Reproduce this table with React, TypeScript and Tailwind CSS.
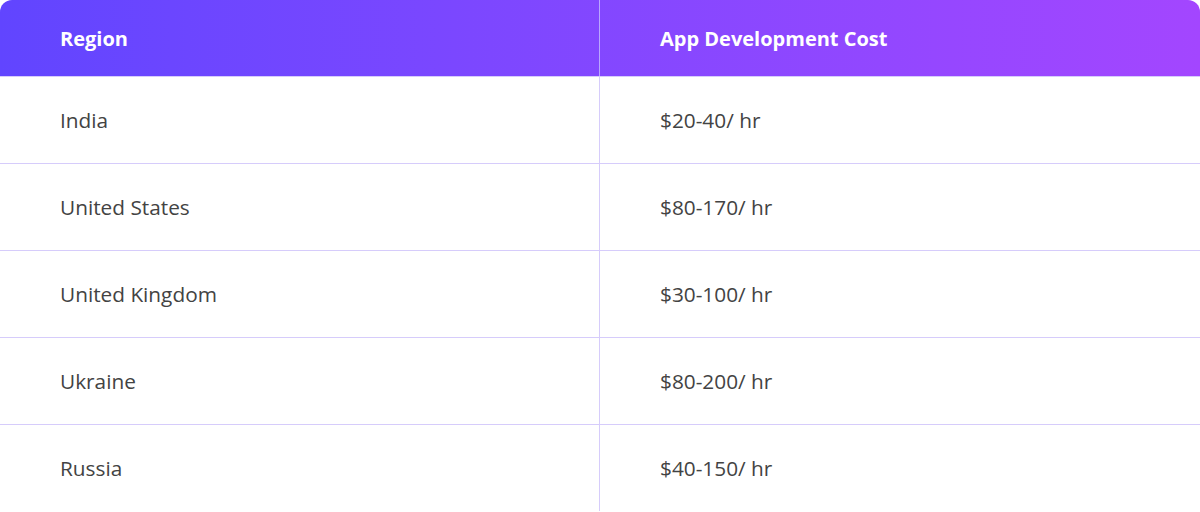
const rows: Array<[string, string]> = [
  ["India", "$20-40/ hr"],
  ["United States", "$80-170/ hr"],
  ["United Kingdom", "$30-100/ hr"],
  ["Ukraine", "$80-200/ hr"],
  ["Russia", "$40-150/ hr"],
];

export default function App() {
  return (
    <div className="w-[1200px] h-[512px] overflow-hidden bg-white font-['Open_Sans',sans-serif]">
      <div className="grid h-[76px] grid-cols-[600px_600px] rounded-t-[12px] bg-gradient-to-r from-[#6145ff] to-[#a346ff] text-[20px] font-bold text-white">
        <div className="flex items-center border-r border-[#b9a6ff] pt-[2px] pl-[60px]">Region</div>
        <div className="flex items-center pt-[2px] pl-[60px]">App Development Cost</div>
      </div>
      {rows.map(([region, cost]) => (
        <div
          key={region}
          className="grid h-[87px] grid-cols-[600px_600px] border-t border-[#d6ccfb] text-[20.8px] text-[#434343]"
        >
          <div className="flex items-center border-r border-[#d6ccfb] pt-[2px] pl-[60px]">{region}</div>
          <div className="flex items-center pt-[2px] pl-[60px]">{cost}</div>
        </div>
      ))}
    </div>
  );
}
